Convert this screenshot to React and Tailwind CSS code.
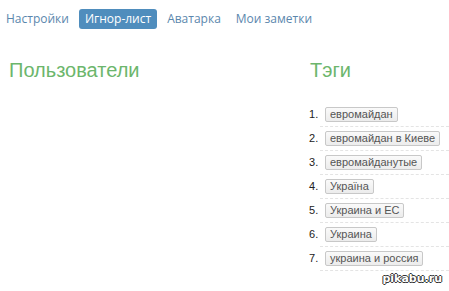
export default function App() {
  const tags = [
    "евромайдан",
    "евромайдан в Киеве",
    "евромайданутые",
    "Украïна",
    "Украина и ЕС",
    "Украина",
    "украина и россия",
  ];

  return (
    <div className="relative w-[449px] h-[291px] overflow-hidden bg-white">
      {/* NAV */}
      <div className="flex items-center gap-[10px] pl-[6px] pt-[9px] text-[12px] text-[#5b87ad] font-['Open_Sans',sans-serif]">
        <span>Настройки</span>
        <span className="px-[6px] h-[20px] leading-[20px] rounded-[3px] bg-[#4f8dbd] text-white">Игнор-лист</span>
        <span>Аватарка</span>
        <span className="ml-[5px]">Мои заметки</span>
      </div>

      <div className="flex mt-[30px]">
        <div className="w-[300px] pl-[9px]">
          <h2 className="text-[20px] leading-[22px] text-[#6cb66c] font-['Liberation_Sans',sans-serif]">Пользователи</h2>
        </div>
        <div className="flex-1 pl-[10px]">
          <h2 className="text-[20px] leading-[22px] text-[#6cb66c] font-['Liberation_Sans',sans-serif]">Тэги</h2>
          <ol className="mt-[22px] font-['Liberation_Sans',sans-serif] text-[11px] text-[#333]">
            {tags.map((t, i) => (
              <li key={t} className="flex items-center h-[24px] border-b border-dashed border-[#e4e4e4] ml-[10px] whitespace-nowrap">
                <span className="w-[15px] -ml-[11px] text-[11px] text-[#222]">{i + 1}.</span>
                <span className="ml-[1px] px-[4px] h-[15px] leading-[13px] border border-[#c8c8c8] rounded-[2px] bg-gradient-to-b from-[#fafafa] to-[#ececec] text-[#555]">
                  {t}
                </span>
              </li>
            ))}
          </ol>
        </div>
      </div>

      {/* watermark */}
      <span className="absolute right-[7px] bottom-[4px] text-[11px] font-bold text-white font-['DejaVu_Sans',sans-serif] [text-shadow:1px_0_#333,-1px_0_#333,0_1px_#333,0_-1px_#333]">
        pikabu.ru
      </span>
    </div>
  );
}
